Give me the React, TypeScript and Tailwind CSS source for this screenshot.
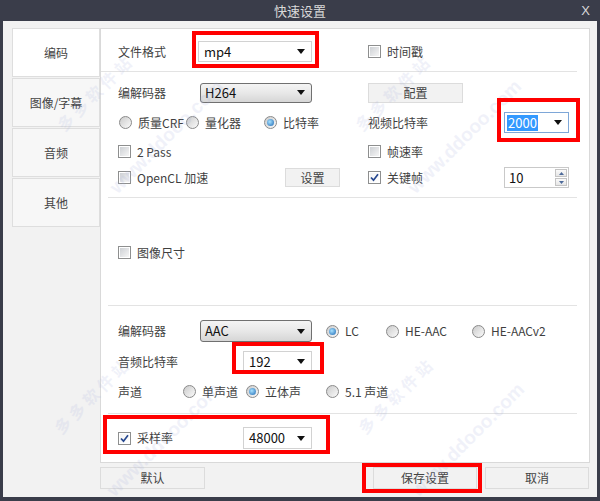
import React from 'react';

const Arrow = () => (
  <svg width="8" height="5" viewBox="0 0 8 5" className="shrink-0">
    <path d="M0 0 H8 L4 5 Z" fill="#111" />
  </svg>
);

const Check = ({ checked = false }: { checked?: boolean }) => (
  <span className="inline-flex w-[13px] h-[13px] shrink-0 border border-[#8e8f8f] bg-white p-[1px]">
    <span
      className={
        checked
          ? 'flex w-full h-full items-center justify-center bg-gradient-to-br from-[#f4f4f4] to-[#ffffff]'
          : 'flex w-full h-full items-center justify-center bg-gradient-to-br from-[#cdd0d4] to-[#f6f6f6]'
      }
    >
      {checked && (
        <svg width="9" height="9" viewBox="0 0 9 9">
          <path d="M1 4.5 L3.5 7.2 L8 1.2" stroke="#26478f" strokeWidth="1.7" fill="none" />
        </svg>
      )}
    </span>
  </span>
);

const Radio = ({ checked = false }: { checked?: boolean }) => (
  <span className="inline-flex w-[13px] h-[13px] shrink-0 items-center justify-center rounded-full border border-[#8a8a8a] bg-gradient-to-br from-[#cbcbcb] to-[#fbfbfb]">
    {checked && (
      <span className="w-[7px] h-[7px] rounded-full bg-[radial-gradient(circle_at_40%_40%,#a8e2ff,#1a66b3)]" />
    )}
  </span>
);

const CheckItem = ({ label, checked, className = '' }: { label: string; checked?: boolean; className?: string }) => (
  <div className={`flex items-center gap-[6px] ${className}`}>
    <Check checked={checked} />
    <span>{label}</span>
  </div>
);

const RadioItem = ({ label, checked, className = '' }: { label: string; checked?: boolean; className?: string }) => (
  <div className={`flex items-center gap-[6px] ${className}`}>
    <Radio checked={checked} />
    <span>{label}</span>
  </div>
);

// white combo box
const Combo = ({ value, className = '' }: { value: string; className?: string }) => (
  <div className={`flex items-center justify-between border border-[#d2d2d2] bg-white pl-[5px] pr-[6px] text-[13px] text-[#111] ${className}`}>
    <span>{value}</span>
    <Arrow />
  </div>
);

// button-style combo box
const GrayCombo = ({ value, className = '' }: { value: string; className?: string }) => (
  <div className={`flex items-center justify-between rounded-[3px] border border-[#707070] bg-gradient-to-b from-[#f4f4f4] via-[#e8e8e8] to-[#d6d6d6] pl-[4px] pr-[6px] text-[13px] text-[#111] ${className}`}>
    <span>{value}</span>
    <Arrow />
  </div>
);

const Btn = ({ label, className = '' }: { label: string; className?: string }) => (
  <div className={`flex items-center justify-center border border-[#dcdcdc] bg-[#f2f2f2] text-[#444] ${className}`}>
    {label}
  </div>
);

const Sep = ({ indent = true }: { indent?: boolean }) => (
  <div className={`h-px bg-[#e3e3e3] mr-[12px] ${indent ? 'ml-[7px]' : ''}`} />
);

const tabs = ['编码', '图像/字幕', '音频', '其他'];

const marks = [
  { x: 95, y: 92 },
  { x: 393, y: 92 },
  { x: 92, y: 395 },
  { x: 396, y: 395 },
];

export default function App() {
  return (
    <div className="relative w-[600px] h-[501px] overflow-hidden bg-[#3a3d4a] flex flex-col font-['Noto_Sans_CJK_SC',sans-serif] text-[12px] text-[#3f3f3f]">
      {/* title bar */}
      <div className="h-[21px] shrink-0 grid grid-cols-[1fr_auto_1fr] items-center text-[#d8d8d8]">
        <div />
        <div className="text-[13px]">快速设置</div>
        <div className="flex justify-end pr-[10px] font-['Liberation_Sans',sans-serif] text-[13px]">X</div>
      </div>

      {/* body */}
      <div className="flex-1 mx-[3px] mb-[4px] bg-[#f2f2f2] pl-[9px] pr-[7px] pt-[7px] flex flex-col">
        <div className="flex">
          {/* tabs */}
          <div className="w-[88px] shrink-0 flex flex-col gap-px">
            {tabs.map((t, i) => (
              <div
                key={t}
                className={`h-[49px] flex items-center justify-center border border-[#dedede] text-[12px] text-[#444] ${i === 0 ? 'bg-white' : 'bg-[#f7f7f7]'}`}
              >
                {t}
              </div>
            ))}
          </div>

          {/* content panel */}
          <div className="w-[490px] h-[435px] border border-[#d9d9d9] bg-white flex flex-col">
            {/* file format */}
            <div className="h-[42px] pt-[12px] pl-[17px]">
              <div className="flex items-center h-[21px]">
                <span className="w-[80px]">文件格式</span>
                <Combo value="mp4" className="w-[114px] h-[21px]" />
                <CheckItem label="时间戳" className="ml-[56px]" />
              </div>
            </div>
            <Sep indent={false} />

            {/* video */}
            <div className="h-[125px] pt-[10px] pl-[17px] flex flex-col">
              <div className="flex items-center h-[21px]">
                <span className="w-[82px]">编解码器</span>
                <GrayCombo value="H264" className="w-[112px] h-[20px]" />
                <Btn label="配置" className="ml-[56px] w-[95px] h-[20px]" />
              </div>
              <div className="flex items-center h-[21px] mt-[9px]">
                <RadioItem label="质量CRF" className="ml-[1px] w-[67px]" />
                <RadioItem label="量化器" className="w-[78px]" />
                <RadioItem label="比特率" checked className="w-[104px]" />
                <span className="w-[136px]">视频比特率</span>
                <div className="w-[65px] h-[21px] flex items-center justify-between border border-[#7ea7d8] bg-white pl-[2px] pr-[6px] text-[13px]">
                  <span className="bg-[#3399ff] text-white leading-[16px] px-[1px]">2000</span>
                  <Arrow />
                </div>
              </div>
              <div className="flex items-center h-[21px] mt-[8px]">
                <CheckItem label="2 Pass" className="w-[250px]" />
                <CheckItem label="帧速率" />
              </div>
              <div className="flex items-center h-[21px] mt-[5px]">
                <CheckItem label="OpenCL 加速" className="w-[167px]" />
                <Btn label="设置" className="w-[55px] h-[19px]" />
                <CheckItem label="关键帧" checked className="ml-[28px] w-[136px]" />
                <div className="w-[65px] h-[21px] flex items-center justify-between border border-[#c9c9c9] bg-white pl-[4px] pr-px text-[13px] text-[#111]">
                  <span>10</span>
                  <div className="flex flex-col gap-px">
                    <div className="w-[12px] h-[8px] flex items-center justify-center border border-[#c4c4c4] bg-gradient-to-b from-[#fafafa] to-[#e6e6e6]">
                      <svg width="5" height="3" viewBox="0 0 5 3"><path d="M0 3 L2.5 0 L5 3 Z" fill="#4d6a9a" /></svg>
                    </div>
                    <div className="w-[12px] h-[8px] flex items-center justify-center border border-[#c4c4c4] bg-gradient-to-b from-[#fafafa] to-[#e6e6e6]">
                      <svg width="5" height="3" viewBox="0 0 5 3"><path d="M0 0 L5 0 L2.5 3 Z" fill="#4d6a9a" /></svg>
                    </div>
                  </div>
                </div>
              </div>
            </div>
            <Sep />

            {/* image size */}
            <div className="h-[107px] pt-[44px] pl-[17px]">
              <div className="flex items-center h-[21px]">
                <CheckItem label="图像尺寸" />
              </div>
            </div>
            <Sep />

            {/* audio */}
            <div className="h-[107px] pt-[14px] pl-[17px] flex flex-col">
              <div className="flex items-center h-[22px]">
                <span className="w-[82px]">编解码器</span>
                <GrayCombo value="AAC" className="w-[112px] h-[22px]" />
                <RadioItem label="LC" checked className="ml-[14px] w-[60px]" />
                <RadioItem label="HE-AAC" className="w-[86px]" />
                <RadioItem label="HE-AACv2" />
              </div>
              <div className="flex items-center h-[21px] mt-[9px]">
                <span className="w-[125px]">音频比特率</span>
                <Combo value="192" className="w-[69px] h-[21px]" />
              </div>
              <div className="flex items-center h-[21px] mt-[9px]">
                <span className="w-[65px]">声道</span>
                <RadioItem label="单声道" className="w-[63px]" />
                <RadioItem label="立体声" checked className="w-[80px]" />
                <RadioItem label="5.1 声道" />
              </div>
            </div>
            <Sep />

            {/* sample rate */}
            <div className="flex-1 pt-[13px] pl-[17px]">
              <div className="flex items-center h-[22px]">
                <CheckItem label="采样率" checked className="w-[125px]" />
                <Combo value="48000" className="w-[69px] h-[22px]" />
              </div>
            </div>
          </div>
        </div>

        {/* bottom buttons */}
        <div className="flex items-center mt-[4px] ml-[88px] mr-px">
          <Btn label="默认" className="w-[105px] h-[22px]" />
          <div className="flex-1" />
          <Btn label="保存设置" className="w-[104px] h-[22px]" />
          <Btn label="取消" className="ml-[8px] w-[104px] h-[22px]" />
        </div>
      </div>

      {/* watermark */}
      {marks.map((m, i) => (
        <React.Fragment key={i}>
          <div
            className="pointer-events-none absolute -translate-x-1/2 -translate-y-1/2 -rotate-45 whitespace-nowrap text-[16px] font-bold text-[#a4aedb] opacity-[0.16] tracking-[4px]"
            style={{ left: m.x, top: m.y }}
          >
            多多软件站
          </div>
          <div
            className="pointer-events-none absolute -translate-x-1/2 -translate-y-1/2 -rotate-45 whitespace-nowrap font-['Liberation_Sans',sans-serif] text-[19px] font-bold text-[#a4aedb] opacity-[0.16]"
            style={{ left: m.x + 72, top: m.y + 45 }}
          >
            www.ddooo.com
          </div>
        </React.Fragment>
      ))}

      {/* red annotation boxes */}
      <div className="pointer-events-none absolute left-[192px] top-[31px] w-[127px] h-[37px] border-4 border-[#ff0000]" />
      <div className="pointer-events-none absolute left-[497px] top-[98px] w-[83px] h-[44px] border-4 border-[#ff0000]" />
      <div className="pointer-events-none absolute left-[232px] top-[342px] w-[92px] h-[32px] border-4 border-[#ff0000]" />
      <div className="pointer-events-none absolute left-[103px] top-[415px] w-[227px] h-[39px] border-4 border-[#ff0000]" />
      <div className="pointer-events-none absolute left-[362px] top-[463px] w-[120px] h-[30px] border-4 border-[#ff0000]" />
    </div>
  );
}
